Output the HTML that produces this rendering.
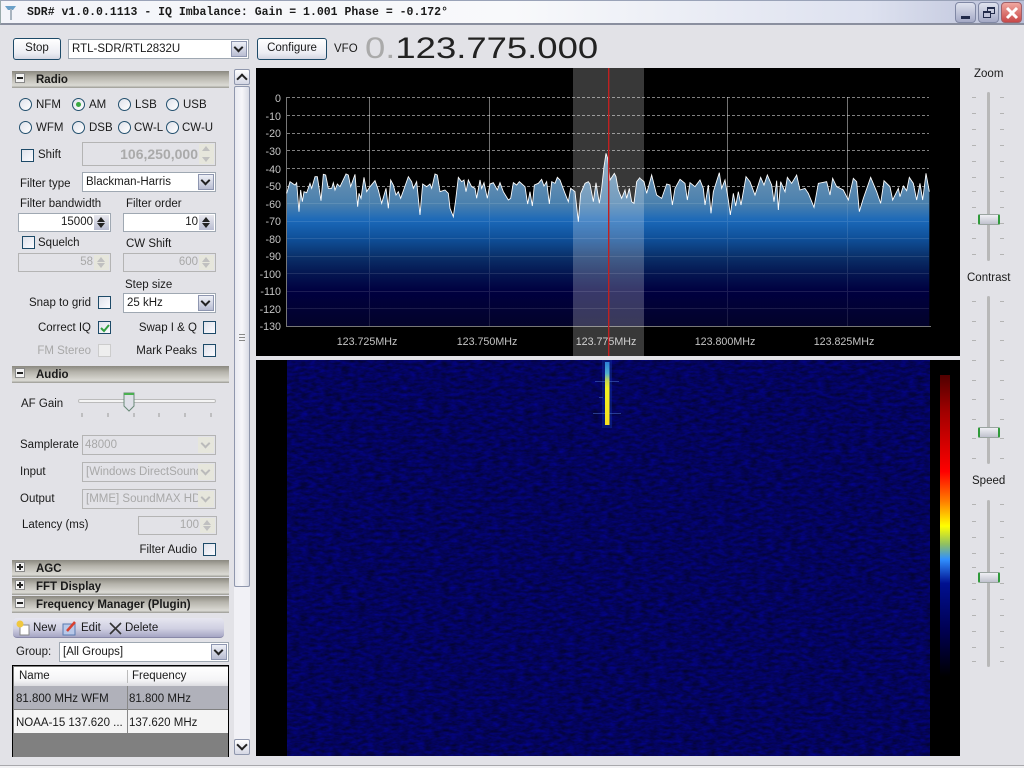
<!DOCTYPE html>
<html><head><meta charset="utf-8"><title>SDR#</title>
<style>
html,body{margin:0;padding:0;width:1024px;height:768px;overflow:hidden;background:#e2e2e7;font-family:"Liberation Sans",sans-serif;font-size:11.5px;color:#1a1a1a}
.t{position:absolute;white-space:nowrap;line-height:16px}
.d{color:#a8a8a8}
.b{position:absolute;box-sizing:border-box}
.btn{position:absolute;box-sizing:border-box;border:1px solid #1d4a68;border-radius:3px;background:linear-gradient(#fff,#ecedf3 70%,#d4d6e2);text-align:center;line-height:18px}
.fld{position:absolute;box-sizing:border-box;border:1px solid #9fa8b2;background:#fff;line-height:19px;padding:0 2px;white-space:nowrap;overflow:hidden}
.fld.r{text-align:right;line-height:17px}
.fld.dis{background:#e2e2e7;color:#a8a8a8;border-color:#b4b4b4}
.ar{position:absolute;box-sizing:border-box;width:16px;top:1px;bottom:1px;right:1px;background:linear-gradient(#eef0f6,#b9bdd2);border:1px solid #8e96b0}
.ar:after{content:"";position:absolute;left:3px;top:2px;width:5px;height:5px;border-right:2px solid #222;border-bottom:2px solid #222;transform:rotate(45deg)}
.dis .ar{background:#e6e6dc;border-color:#e6e6dc}
.dis .ar:after{border-color:#bbb}
.sp{position:absolute;box-sizing:border-box;width:15px;top:1px;bottom:1px;right:1px;background:linear-gradient(#e8e8ee,#b9bdd2)}
.sp:before,.sp:after{content:"";position:absolute;left:3px;border-left:4px solid transparent;border-right:4px solid transparent}
.sp:before{top:2px;border-bottom:5px solid #222}
.sp:after{bottom:2px;border-top:5px solid #222}
.dis .sp{background:#e6e6dc}
.dis .sp:before{border-bottom-color:#c0c0c0}
.dis .sp:after{border-top-color:#c0c0c0}
.cb{position:absolute;box-sizing:border-box;width:13px;height:13px;border:1px solid #1d4a68;background:linear-gradient(135deg,#dfe2ea,#fbfbff)}
.rd{position:absolute;box-sizing:border-box;width:13px;height:13px;border:1px solid #23506e;border-radius:50%;background:linear-gradient(135deg,#dfe2ea,#fff)}
.hd{position:absolute;left:12px;width:217px;height:17px;background:linear-gradient(#8b8980,#b5b3ab 35%,#dbdad4 85%,#9a9a94);font-weight:bold;font-size:11.5px;line-height:19px}
.hd span{position:absolute;left:24px;top:0;white-space:nowrap}
.hd i{position:absolute;left:3px;top:2px;width:10px;height:10px;box-sizing:border-box;border:1px solid #888;background:#f3f3f3}
.hd i:before{content:"";position:absolute;left:1px;top:3px;width:6px;height:2px;background:#222}
.hd i.p:after{content:"";position:absolute;left:3px;top:1px;width:2px;height:6px;background:#222}
.th{position:absolute;box-sizing:border-box;width:22px;height:11px;border-radius:2px;border:1px solid #9aa4a0;border-left:2px solid #2f9a3a;border-right:2px solid #2f9a3a;background:linear-gradient(#f0f0f4,#c0c2ce)}
.tr{position:absolute;left:987px;width:3px;background:#b8b8b8;border-radius:2px}
</style></head><body>

<!-- title bar -->
<div class="b" style="left:0;top:0;width:1024px;height:25px;background:linear-gradient(90deg,#f3f4f9,#f8f9fb 50%,#dde1ef 85%,#b9bfd8);border-bottom:2px solid #8a8f9f;border-left:1px solid #9aa;border-top:1px solid #9aa3b8"></div>
<svg class="b" style="left:3px;top:3px" width="16" height="18"><path d="M2 3h11l-3 4H5z" fill="#6aa0c8"/><rect x="7" y="6" width="2" height="11" fill="#a8b4c0"/></svg>
<div class="t" style="left:27px;top:5px;font-family:'Liberation Mono',monospace;font-weight:bold;font-size:11.5px">SDR# v1.0.0.1113 - IQ Imbalance: Gain = 1.001 Phase = -0.172°</div>
<div class="b" style="left:955px;top:2px;width:21px;height:21px;border-radius:4px;border:1px solid #8088a4;background:linear-gradient(#dfe2ee,#a4a9c6)"><div class="b" style="left:5px;top:13px;width:9px;height:3px;background:#222b4a"></div></div>
<div class="b" style="left:978px;top:2px;width:21px;height:21px;border-radius:4px;border:1px solid #8088a4;background:linear-gradient(#dfe2ee,#a4a9c6)"><div class="b" style="left:8px;top:4px;width:8px;height:7px;border:1px solid #222b4a;border-top-width:2px"></div><div class="b" style="left:4px;top:8px;width:8px;height:7px;border:1px solid #222b4a;border-top-width:2px;background:#c0c3d8"></div></div>
<div class="b" style="left:1001px;top:2px;width:21px;height:21px;border-radius:4px;border:1px solid #a06068;background:linear-gradient(#f0a8a0,#c84848)"><svg class="b" style="left:3px;top:3px" width="14" height="14"><path d="M2 2L12 12M12 2L2 12" stroke="#fff" stroke-width="3"/></svg></div>

<!-- top row -->
<div class="btn" style="left:13px;top:38px;width:48px;height:22px">Stop</div>
<div class="fld" style="left:68px;top:39px;width:181px;height:20px;padding-left:3px">RTL-SDR/RTL2832U<div class="ar"></div></div>
<div class="btn" style="left:257px;top:38px;width:70px;height:22px">Configure</div>
<div class="t" style="left:334px;top:41px">VFO</div>
<div class="t" style="left:365px;top:32px;font-size:30px;line-height:34px;transform:scaleX(1.215);transform-origin:0 0;color:#222"><span style="color:#aaa">0.</span>123.775.000</div>

<!-- left panel -->
<div class="b" style="left:234px;top:69px;width:16px;height:16px;border:1px solid #8f97ad;border-radius:2px;background:linear-gradient(#fff,#d4d7e4)"></div>
<div class="b" style="left:238px;top:75px;width:8px;height:8px;border-left:2px solid #222;border-top:2px solid #222;transform:rotate(45deg)"></div>
<div class="b" style="left:234px;top:86px;width:16px;height:501px;border:1px solid #8f97ad;border-radius:2px;background:linear-gradient(90deg,#e8e9f0,#f6f6fa 50%,#d8dae4)"></div>
<div class="b" style="left:239px;top:334px;width:6px;height:7px;border-top:1px solid #888;border-bottom:1px solid #888"><div class="b" style="left:0;top:2px;width:6px;height:1px;background:#888"></div></div>
<div class="b" style="left:234px;top:587px;width:16px;height:152px;background:#f1f1f6"></div>
<div class="b" style="left:234px;top:739px;width:16px;height:16px;border:1px solid #8f97ad;border-radius:2px;background:linear-gradient(#fff,#d4d7e4)"></div>
<div class="b" style="left:238px;top:741px;width:8px;height:8px;border-right:2px solid #222;border-bottom:2px solid #222;transform:rotate(45deg)"></div>

<div class="hd" style="top:71px"><i></i><span>Radio</span></div>
<div class="rd" style="left:19px;top:98px"></div><div class="t" style="left:36px;top:97px">NFM</div>
<div class="rd" style="left:72px;top:98px"><div class="b" style="left:3px;top:3px;width:5px;height:5px;border-radius:50%;background:#3aa840"></div></div><div class="t" style="left:89px;top:97px">AM</div>
<div class="rd" style="left:118px;top:98px"></div><div class="t" style="left:135px;top:97px">LSB</div>
<div class="rd" style="left:166px;top:98px"></div><div class="t" style="left:183px;top:97px">USB</div>
<div class="rd" style="left:19px;top:121px"></div><div class="t" style="left:36px;top:120px">WFM</div>
<div class="rd" style="left:72px;top:121px"></div><div class="t" style="left:89px;top:120px">DSB</div>
<div class="rd" style="left:118px;top:121px"></div><div class="t" style="left:134px;top:120px">CW-L</div>
<div class="rd" style="left:166px;top:121px"></div><div class="t" style="left:182px;top:120px">CW-U</div>

<div class="cb" style="left:21px;top:149px"></div><div class="t" style="left:38px;top:147px">Shift</div>
<div class="fld r dis" style="left:82px;top:142px;width:134px;height:24px;font-weight:bold;font-size:14px;line-height:22px;padding-right:17px;color:#aaa">106,250,000<div class="sp"></div></div>
<div class="t" style="left:20px;top:176px">Filter type</div>
<div class="fld" style="left:82px;top:172px;width:134px;height:20px;padding-left:3px">Blackman-Harris<div class="ar"></div></div>
<div class="t" style="left:20px;top:196px">Filter bandwidth</div>
<div class="t" style="left:126px;top:196px">Filter order</div>
<div class="fld r" style="left:18px;top:213px;width:93px;height:19px;padding-right:17px">15000<div class="sp"></div></div>
<div class="fld r" style="left:123px;top:213px;width:93px;height:19px;padding-right:17px">10<div class="sp"></div></div>
<div class="cb" style="left:22px;top:236px"></div><div class="t" style="left:38px;top:235px">Squelch</div>
<div class="t" style="left:126px;top:236px">CW Shift</div>
<div class="fld r dis" style="left:18px;top:253px;width:93px;height:19px;padding-right:17px">58<div class="sp"></div></div>
<div class="fld r dis" style="left:123px;top:253px;width:93px;height:19px;padding-right:17px">600<div class="sp"></div></div>
<div class="t" style="left:125px;top:277px">Step size</div>
<div class="fld" style="left:123px;top:293px;width:93px;height:20px;padding-left:3px">25 kHz<div class="ar"></div></div>
<div class="t" style="right:933px;top:295px">Snap to grid</div><div class="cb" style="left:98px;top:296px"></div>
<div class="t" style="right:933px;top:320px">Correct IQ</div>
<div class="cb" style="left:98px;top:321px"><svg class="b" style="left:1px;top:1px" width="10" height="10"><path d="M1 5L4 8L9 2" fill="none" stroke="#32a040" stroke-width="2"/></svg></div>
<div class="t" style="right:827px;top:320px">Swap I &amp; Q</div><div class="cb" style="left:203px;top:321px"></div>
<div class="t d" style="right:933px;top:343px">FM Stereo</div><div class="cb" style="left:98px;top:344px;border-color:#ccc;background:#eee"></div>
<div class="t" style="right:827px;top:343px">Mark Peaks</div><div class="cb" style="left:203px;top:344px"></div>

<div class="hd" style="top:366px"><i></i><span>Audio</span></div>
<div class="t" style="left:21px;top:396px">AF Gain</div>
<div class="b" style="left:78px;top:399px;width:138px;height:4px;border:1px solid #bbb;background:#f4f4f4;border-radius:2px"></div>
<svg class="b" style="left:78px;top:390px" width="140" height="30"><path d="M46 3h10v13l-5 5-5-5z" fill="#dfe0e8" stroke="#6a8a78"/><path d="M46 3h10v2H46z" fill="#4ab050"/><path d="M4 23v4M30 23v4M56 23v4M81 23v4M107 23v4M133 23v4" stroke="#999"/></svg>
<div class="t" style="left:20px;top:437px">Samplerate</div>
<div class="fld dis" style="left:82px;top:435px;width:134px;height:20px">48000<div class="ar"></div></div>
<div class="t" style="left:20px;top:464px">Input</div>
<div class="fld dis" style="left:82px;top:462px;width:134px;height:20px;padding-left:3px">[Windows DirectSound<div class="ar"></div></div>
<div class="t" style="left:20px;top:491px">Output</div>
<div class="fld dis" style="left:82px;top:489px;width:134px;height:20px;padding-left:3px">[MME] SoundMAX HD<div class="ar"></div></div>
<div class="t" style="left:22px;top:517px">Latency (ms)</div>
<div class="fld r dis" style="left:138px;top:516px;width:79px;height:19px;padding-right:17px">100<div class="sp"></div></div>
<div class="t" style="right:827px;top:542px">Filter Audio</div><div class="cb" style="left:203px;top:543px"></div>

<div class="hd" style="top:560px"><i class="p"></i><span>AGC</span></div>
<div class="hd" style="top:578px"><i class="p"></i><span>FFT Display</span></div>
<div class="hd" style="top:596px"><i></i><span>Frequency Manager (Plugin)</span></div>

<div class="b" style="left:13px;top:618px;width:211px;height:20px;border-radius:4px;background:linear-gradient(#e6e6f0,#d0d0e2 55%,#a6a6c4);border-bottom:1px solid #8888a8"></div>
<svg class="b" style="left:15px;top:620px" width="130" height="16"><path d="M5 5h9v10H5z" fill="#fff" stroke="#888"/><circle cx="5" cy="4" r="3.500" fill="#f0c840"/><path d="M48 4h12v11H48z" fill="#b8c8e8" stroke="#5a7ab0"/><path d="M52 11L60 2" stroke="#d84030" stroke-width="2.500"/><path d="M95 3L106 14M106 3L95 14" stroke="#333" stroke-width="1.600"/></svg>
<div class="t" style="left:33px;top:620px">New</div>
<div class="t" style="left:81px;top:620px">Edit</div>
<div class="t" style="left:125px;top:620px">Delete</div>
<div class="t" style="left:16px;top:644px">Group:</div>
<div class="fld" style="left:59px;top:642px;width:170px;height:20px;padding-left:3px">[All Groups]<div class="ar"></div></div>

<div class="b" style="left:12px;top:665px;width:217px;height:92px;border:1px solid #000;border-bottom:0;background:#808080;overflow:hidden">
<div class="b" style="left:1px;top:1px;width:214px;height:19px;background:linear-gradient(#fff,#f4f4f6 70%,#dcdce0)"></div>
<div class="b" style="left:114px;top:4px;width:1px;height:13px;background:#bbb"></div>
<div class="b" style="left:1px;top:20px;width:214px;height:23px;background:#b0b1ba"></div>
<div class="b" style="left:1px;top:44px;width:214px;height:23px;background:#f4f4f4"></div>
<div class="b" style="left:114px;top:20px;width:1px;height:47px;background:#888"></div>
</div>
<div class="t" style="left:19px;top:668px">Name</div>
<div class="t" style="left:132px;top:668px">Frequency</div>
<div class="t" style="left:16px;top:691px">81.800 MHz WFM</div>
<div class="t" style="left:129px;top:691px">81.800 MHz</div>
<div class="t" style="left:16px;top:715px">NOAA-15 137.620 ...</div>
<div class="t" style="left:129px;top:715px">137.620 MHz</div>

<!-- spectrum -->
<svg class="b" style="left:0;top:0" width="1024" height="768">
<defs>
<linearGradient id="g" gradientUnits="userSpaceOnUse" x1="0" y1="340" x2="0" y2="798">
<stop offset="0" stop-color="#6a92b2"/><stop offset=".2" stop-color="#4a80ae"/><stop offset=".31" stop-color="#1a68b8"/><stop offset=".43" stop-color="#0f4f98"/><stop offset=".55" stop-color="#0a2f68"/><stop offset=".66" stop-color="#041550"/><stop offset=".77" stop-color="#000040"/><stop offset="1" stop-color="#03032a"/>
</linearGradient>
<linearGradient id="cb" x1="0" y1="0" x2="0" y2="1">
<stop offset="0" stop-color="#500000"/><stop offset=".12" stop-color="#a00000"/><stop offset=".32" stop-color="#ff0000"/><stop offset=".42" stop-color="#ff8000"/><stop offset=".5" stop-color="#ffff00"/><stop offset=".56" stop-color="#90c060"/><stop offset=".61" stop-color="#3090ff"/><stop offset=".69" stop-color="#001090"/><stop offset=".85" stop-color="#000050"/><stop offset="1" stop-color="#000"/>
</linearGradient>
<linearGradient id="sig" x1="0" y1="0" x2="0" y2="1">
<stop offset="0" stop-color="#2c80d8"/><stop offset=".18" stop-color="#50b0d0"/><stop offset=".3" stop-color="#c8d850"/><stop offset=".42" stop-color="#f0f020"/><stop offset="1" stop-color="#f8e020"/>
</linearGradient>
<filter id="n" x="0" y="0" width="100%" height="100%" color-interpolation-filters="sRGB">
<feTurbulence type="fractalNoise" baseFrequency="0.12 0.3" numOctaves="3" seed="4"/>
<feColorMatrix type="matrix" values="0 0 0 0 0.015  0 0 0 0 0.015  0.45 0 0 0 0.14  0 0 0 0 1"/>
</filter>
</defs>
<rect x="256" y="68" width="704" height="288" fill="#000"/>
<g stroke="#fff" stroke-opacity=".5" stroke-dasharray="3 2" shape-rendering="crispEdges">
<path d="M287 97.500H929M287 115.500H929M287 133.500H929M287 150.500H929M287 168.500H929M287 186.500H929"/>
</g>
<g stroke="#fff" stroke-opacity=".38" shape-rendering="crispEdges">
<path d="M369.500 97V240M489.500 97V240M727.500 97V240M847.500 97V240"/>
</g>
<g transform="translate(260 60) scale(.33333)">
<polygon fill="url(#g)" points="80,798 80,400 90,365 100,372 105,375 110,368 117,455 122,390 127,425 132,395 140,398 150,370 155,385 165,350 172,350 183,422 190,343 197,345 205,385 215,385 220,368 225,390 232,372 240,380 258,342 265,345 272,380 285,343 293,440 297,400 303,415 312,352 320,395 330,380 345,362 355,390 365,430 378,385 385,445 392,360 400,375 408,405 415,395 422,415 445,350 455,365 460,385 470,365 480,465 488,372 500,380 510,372 515,385 525,342 532,345 540,395 555,390 565,400 570,445 580,470 587,420 595,352 605,365 612,360 618,395 625,360 635,380 645,385 650,415 660,360 665,385 672,368 682,415 690,372 700,368 712,390 720,368 730,395 745,420 752,415 760,368 770,375 778,365 795,380 803,432 810,395 817,438 823,375 835,370 845,358 852,378 860,365 868,432 875,365 885,370 892,352 900,360 915,400 925,425 932,385 945,395 955,485 962,400 975,370 985,365 990,372 1000,425 1008,368 1018,430 1025,385 1032,320 1038,280 1043,295 1050,360 1063,340 1068,350 1075,390 1085,415 1095,390 1100,415 1108,385 1115,425 1122,430 1130,365 1140,352 1140,798"/>
</g>
<g transform="translate(640 60) scale(.33333)">
<polygon fill="url(#g)" points="0,798 0,355 12,365 20,400 35,345 50,405 65,415 80,372 90,375 97,435 105,385 120,358 135,370 142,420 150,368 165,380 180,360 190,385 195,435 205,375 213,460 220,395 238,338 245,385 255,360 265,420 271,465 280,400 287,438 295,395 303,435 318,350 330,365 345,405 362,352 372,375 382,345 395,375 402,425 410,362 415,450 422,365 435,395 442,352 455,370 470,345 480,390 495,385 505,400 522,442 535,370 560,365 570,405 578,355 590,380 610,390 625,420 640,355 650,365 658,455 670,415 692,352 710,395 722,430 732,362 750,380 758,420 775,385 780,410 790,378 800,392 808,352 820,370 830,420 840,370 848,420 858,340 868,395 868,798"/>
</g>
<g stroke="#fff" stroke-opacity=".11" shape-rendering="crispEdges">
<path d="M287 203.500H929M287 221.500H929M287 238.500H929M287 256.500H929M287 273.500H929M287 291.500H929M287 308.500H929M369.500 97V326M489.500 97V326M727.500 97V326M847.500 97V326"/>
</g>
<path d="M286.500 97V326.500H931" fill="none" stroke="#777" shape-rendering="crispEdges"/>
<g transform="translate(260 60) scale(.33333)">
<polyline fill="none" stroke="#fff" stroke-width="2.600" points="80,400 90,365 100,372 105,375 110,368 117,455 122,390 127,425 132,395 140,398 150,370 155,385 165,350 172,350 183,422 190,343 197,345 205,385 215,385 220,368 225,390 232,372 240,380 258,342 265,345 272,380 285,343 293,440 297,400 303,415 312,352 320,395 330,380 345,362 355,390 365,430 378,385 385,445 392,360 400,375 408,405 415,395 422,415 445,350 455,365 460,385 470,365 480,465 488,372 500,380 510,372 515,385 525,342 532,345 540,395 555,390 565,400 570,445 580,470 587,420 595,352 605,365 612,360 618,395 625,360 635,380 645,385 650,415 660,360 665,385 672,368 682,415 690,372 700,368 712,390 720,368 730,395 745,420 752,415 760,368 770,375 778,365 795,380 803,432 810,395 817,438 823,375 835,370 845,358 852,378 860,365 868,432 875,365 885,370 892,352 900,360 915,400 925,425 932,385 945,395 955,485 962,400 975,370 985,365 990,372 1000,425 1008,368 1018,430 1025,385 1032,320 1038,280 1043,295 1050,360 1063,340 1068,350 1075,390 1085,415 1095,390 1100,415 1108,385 1115,425 1122,430 1130,365 1140,352"/>
</g>
<g transform="translate(640 60) scale(.33333)">
<polyline fill="none" stroke="#fff" stroke-width="2.600" points="0,355 12,365 20,400 35,345 50,405 65,415 80,372 90,375 97,435 105,385 120,358 135,370 142,420 150,368 165,380 180,360 190,385 195,435 205,375 213,460 220,395 238,338 245,385 255,360 265,420 271,465 280,400 287,438 295,395 303,435 318,350 330,365 345,405 362,352 372,375 382,345 395,375 402,425 410,362 415,450 422,365 435,395 442,352 455,370 470,345 480,390 495,385 505,400 522,442 535,370 560,365 570,405 578,355 590,380 610,390 625,420 640,355 650,365 658,455 670,415 692,352 710,395 722,430 732,362 750,380 758,420 775,385 780,410 790,378 800,392 808,352 820,370 830,420 840,370 848,420 858,340 868,395"/>
</g>
<g fill="#c4c4c4" font-family="'Liberation Sans',sans-serif" font-size="10.700" text-anchor="end">
<text x="281" y="102">0</text><text x="281" y="120">-10</text><text x="281" y="137">-20</text><text x="281" y="155">-30</text><text x="281" y="173">-40</text><text x="281" y="190">-50</text><text x="281" y="208">-60</text><text x="281" y="225">-70</text><text x="281" y="243">-80</text><text x="281" y="260">-90</text><text x="281" y="278">-100</text><text x="281" y="295">-110</text><text x="281" y="313">-120</text><text x="281" y="330">-130</text>
</g>
<g fill="#c4c4c4" font-family="'Liberation Sans',sans-serif" font-size="10.700" text-anchor="middle">
<text x="367" y="345">123.725MHz</text><text x="487" y="345">123.750MHz</text><text x="606" y="345">123.775MHz</text><text x="725" y="345">123.800MHz</text><text x="844" y="345">123.825MHz</text>
</g>
<rect x="573" y="68" width="71" height="288" fill="#fff" fill-opacity=".22"/>
<rect x="608" y="68" width="1.400" height="288" fill="#c02020"/>

<!-- waterfall -->
<rect x="256" y="360" width="704" height="396" fill="#000"/>
<rect x="287" y="360" width="643" height="396" filter="url(#n)"/>
<rect x="602" y="360" width="10" height="68" fill="#1030a0" opacity=".45"/>
<path d="M595 381.500H619M599 397.500H603M593 413.500H621" stroke="#4060c0" stroke-opacity=".6"/>
<rect x="605" y="362" width="4.500" height="63" fill="url(#sig)"/>
<rect x="940" y="375" width="10" height="302" fill="url(#cb)"/>

<!-- slider ticks -->
<g stroke="#b4b4b4" shape-rendering="crispEdges">
<path d="M972 97.500h4M1000 97.500h4M972 113.500h4M1000 113.500h4M972 129.500h4M1000 129.500h4M972 145.500h4M1000 145.500h4M972 161.500h4M1000 161.500h4M972 177.500h4M1000 177.500h4M972 191.500h4M1000 191.500h4M972 207.500h4M1000 207.500h4M972 223.500h4M1000 223.500h4M972 238.500h4M1000 238.500h4M972 254.500h4M1000 254.500h4"/>
<path d="M972 301.500h4M1000 301.500h4M972 321.500h4M1000 321.500h4M972 340.500h4M1000 340.500h4M972 360.500h4M1000 360.500h4M972 380.500h4M1000 380.500h4M972 399.500h4M1000 399.500h4M972 419.500h4M1000 419.500h4M972 438.500h4M1000 438.500h4M972 458.500h4M1000 458.500h4"/>
<path d="M972 504.500h4M1000 504.500h4M972 521.500h4M1000 521.500h4M972 537.500h4M1000 537.500h4M972 553.500h4M1000 553.500h4M972 567.500h4M1000 567.500h4M972 583.500h4M1000 583.500h4M972 599.500h4M1000 599.500h4M972 615.500h4M1000 615.500h4M972 631.500h4M1000 631.500h4M972 647.500h4M1000 647.500h4M972 661.500h4M1000 661.500h4"/>
</g>
<rect x="0" y="765" width="1024" height="1" fill="#a8a8ac"/>
<rect x="0" y="766" width="1024" height="2" fill="#f2f2f4"/>
</svg>

<!-- right sliders -->
<div class="t" style="left:974px;top:66px">Zoom</div>
<div class="tr" style="top:92px;height:169px"></div>
<div class="th" style="left:978px;top:214px"></div>
<div class="t" style="left:967px;top:270px">Contrast</div>
<div class="tr" style="top:296px;height:168px"></div>
<div class="th" style="left:978px;top:427px"></div>
<div class="t" style="left:972px;top:473px">Speed</div>
<div class="tr" style="top:500px;height:167px"></div>
<div class="th" style="left:978px;top:572px"></div>

</body></html>
